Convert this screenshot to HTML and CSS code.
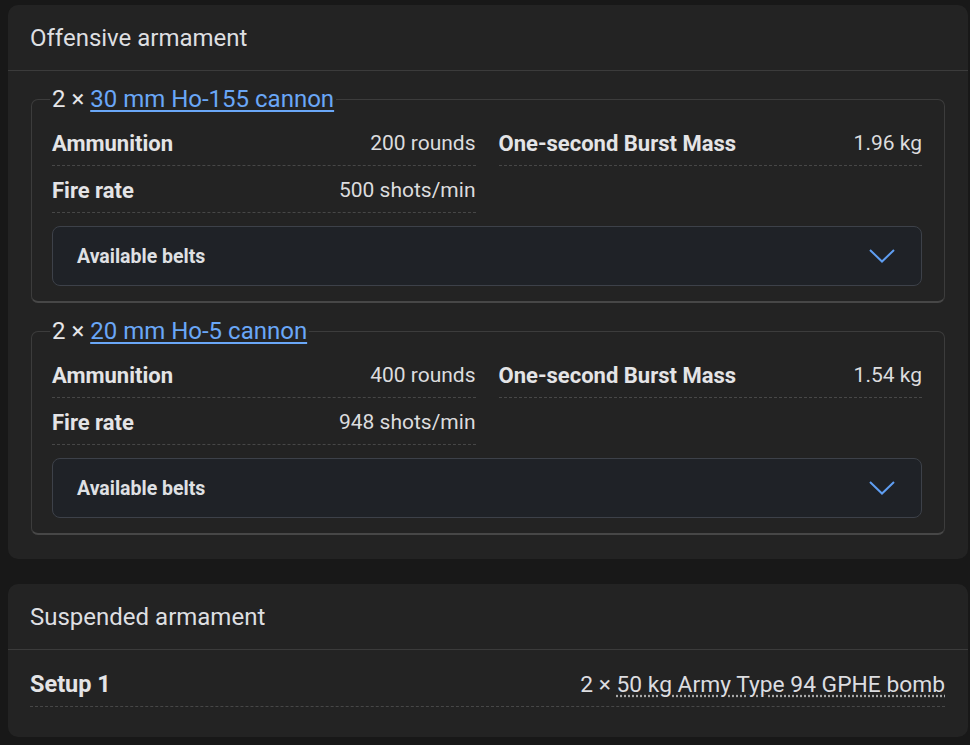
FILE: index.html
```html
<!DOCTYPE html>
<html lang="en">
<head>
<meta charset="utf-8">
<title>Armament</title>
<link rel="stylesheet" href="styles.css">
</head>
<body>
<div class="page">
  <section class="card card-offensive">
    <header class="card-header">Offensive armament</header>
    <div class="card-body">
      <fieldset class="weapon">
        <legend class="weapon-title">2 × <a href="#" class="weapon-link">30 mm Ho-155 cannon</a></legend>
        <div class="stats">
          <div class="stat"><span class="stat-label">Ammunition</span><span class="stat-value">200 rounds</span></div>
          <div class="stat"><span class="stat-label">One-second Burst Mass</span><span class="stat-value">1.96 kg</span></div>
          <div class="stat"><span class="stat-label">Fire rate</span><span class="stat-value">500 shots/min</span></div>
        </div>
        <div class="belts">
          <span class="belts-title">Available belts</span>
          <svg class="chevron" width="26" height="14" viewBox="0 0 26 14"><path d="M1 1 L13 12.5 L25 1" fill="none" stroke="#5f9ef2" stroke-width="2"/></svg>
        </div>
      </fieldset>
      <fieldset class="weapon">
        <legend class="weapon-title">2 × <a href="#" class="weapon-link">20 mm Ho-5 cannon</a></legend>
        <div class="stats">
          <div class="stat"><span class="stat-label">Ammunition</span><span class="stat-value">400 rounds</span></div>
          <div class="stat"><span class="stat-label">One-second Burst Mass</span><span class="stat-value">1.54 kg</span></div>
          <div class="stat"><span class="stat-label">Fire rate</span><span class="stat-value">948 shots/min</span></div>
        </div>
        <div class="belts">
          <span class="belts-title">Available belts</span>
          <svg class="chevron" width="26" height="14" viewBox="0 0 26 14"><path d="M1 1 L13 12.5 L25 1" fill="none" stroke="#5f9ef2" stroke-width="2"/></svg>
        </div>
      </fieldset>
    </div>
  </section>
  <section class="card card-suspended">
    <header class="card-header">Suspended armament</header>
    <div class="card-body suspended-body">
      <div class="setup-row"><span class="setup-label">Setup 1</span><span class="setup-value">2 × <span class="dotted">50 kg Army Type 94 GPHE bomb</span></span></div>
    </div>
  </section>
</div>
</body>
</html>
```
FILE: styles.css
```css
html, body {
  margin: 0;
  padding: 0;
  background: #181818;
}
body {
  font-family: Roboto, "Noto Sans", "Liberation Sans", sans-serif;
  color: #e2e2e4;
}
.page {
  padding: 5px 0 0 8px;
  width: 960px;
  display: flex;
  flex-direction: column;
  gap: 25px;
}
.card {
  background: #232323;
  border-radius: 10px;
}
.card-header {
  height: 66px;
  box-sizing: border-box;
  padding: 0 22px;
  display: flex;
  align-items: center;
  font-size: 24px;
  color: #dedfe1;
  border-bottom: 1px solid #3b3b3b;
}
.card-body {
  padding: 14px 23px 24px 23px;
  display: flex;
  flex-direction: column;
  gap: 14px;
}
.weapon {
  margin: 0;
  padding: 6px 22px 15px 20px;
  border: 1px solid #3c3c3c;
  border-bottom: 2px solid #474747;
  border-radius: 7px;
  min-width: 0;
}
.weapon-title {
  padding: 0 2px;
  margin-left: -2px;
  font-size: 24px;
  line-height: 28px;
  color: #e6e6e8;
}
.weapon-link {
  color: #6aa7f7;
  text-decoration: underline;
  text-decoration-thickness: 1.5px;
  text-underline-offset: 3px;
}
.stats {
  display: grid;
  grid-template-columns: 1fr 1fr;
  column-gap: 23px;
}
.stat {
  height: 44px;
  display: flex;
  align-items: center;
  justify-content: space-between;
  border-bottom: 1px dashed #474747;
  padding-top: 2px;
  box-sizing: content-box;
}
.stat-label {
  font-size: 22px;
  font-weight: 700;
  color: #e4e4e6;
}
.stat-value {
  font-size: 21px;
  color: #dcdcde;
}
.belts {
  margin-top: 13px;
  height: 58px;
  border: 1px solid #3d4149;
  border-radius: 8px;
  background: #1f2227;
  display: flex;
  align-items: center;
  justify-content: space-between;
  padding: 0 26px 0 24px;
}
.belts-title {
  font-size: 19.5px;
  font-weight: 700;
  color: #dfe0e3;
}
.chevron {
  display: block;
}
.suspended-body {
  padding: 10px 23px 30px 22px;
}
.setup-row {
  height: 44px;
  display: flex;
  align-items: center;
  justify-content: space-between;
  border-bottom: 1px dashed #474747;
  padding-top: 2px;
  box-sizing: content-box;
}
.setup-label {
  font-size: 23.5px;
  font-weight: 700;
  color: #e4e4e6;
}
.setup-value {
  font-size: 22.8px;
  color: #dcdde0;
}
.dotted {
  text-decoration: underline dotted #a8a8a8;
  text-underline-offset: 4px;
}
```
